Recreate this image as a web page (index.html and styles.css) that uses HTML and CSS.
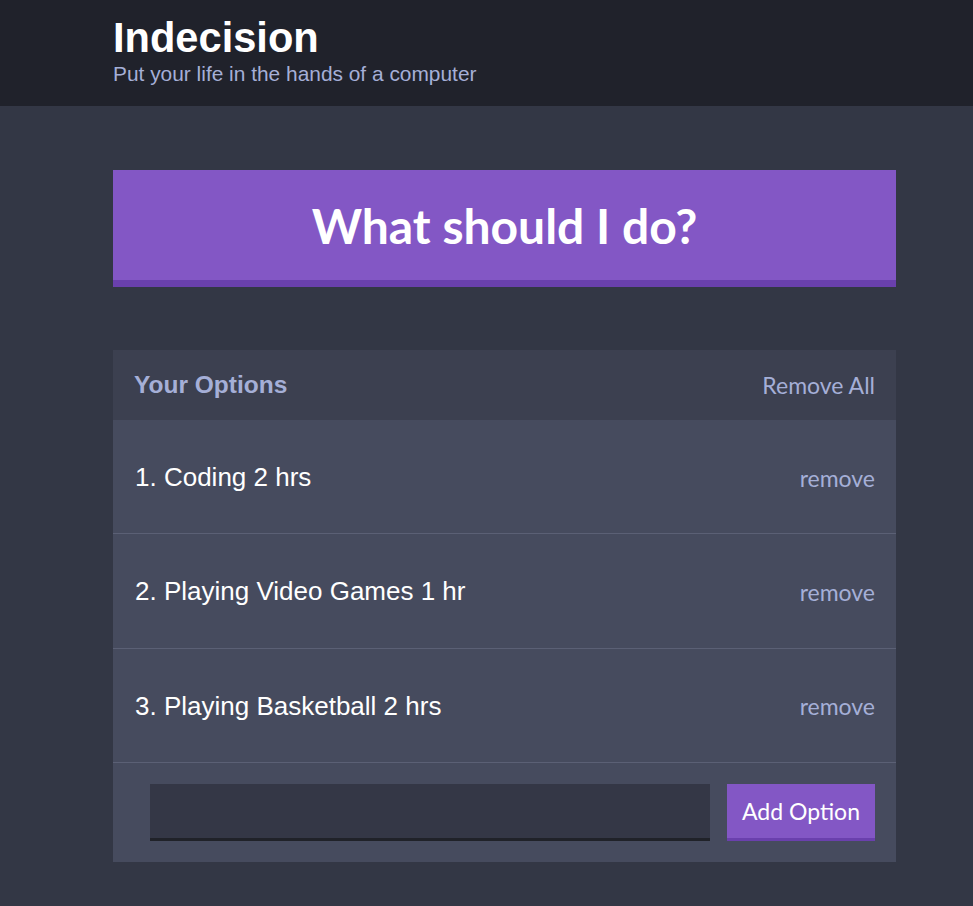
FILE: index.html
```html
<!DOCTYPE html>
<html lang="en">
<head>
<meta charset="utf-8">
<title>Indecision</title>
<link rel="stylesheet" href="styles.css">
</head>
<body>
<header class="header">
  <div class="container">
    <h1 class="header__title">Indecision</h1>
    <h2 class="header__subtitle">Put your life in the hands of a computer</h2>
  </div>
</header>
<main class="container main">
  <button class="big-button">What should I do?</button>
  <section class="widget">
    <div class="widget-header">
      <h3 class="widget-header__title">Your Options</h3>
      <button class="button button--link">Remove All</button>
    </div>
    <div class="option">
      <p class="option__text">1. Coding 2 hrs</p>
      <button class="button button--link button--small">remove</button>
    </div>
    <div class="option">
      <p class="option__text">2. Playing Video Games 1 hr</p>
      <button class="button button--link button--small">remove</button>
    </div>
    <div class="option">
      <p class="option__text">3. Playing Basketball 2 hrs</p>
      <button class="button button--link button--small">remove</button>
    </div>
    <form class="add-option">
      <input class="add-option__input" type="text" name="option">
      <button class="button button--add" type="button">Add Option</button>
    </form>
  </section>
</main>
</body>
</html>
```
FILE: styles.css
```css
* { box-sizing: border-box; }
html, body { margin: 0; padding: 0; }
body {
  background: #333745;
  font-family: "Liberation Sans", Arial, sans-serif;
  color: #ffffff;
  min-height: 906px;
}
.container {
  width: 783px;
  margin-left: 113px;
}
.header {
  background: #20222b;
  padding: 14px 0 20px;
}
.header__title {
  margin: 0;
  font-size: 41.6px;
  font-weight: bold;
  line-height: normal;
  color: #ffffff;
}
.header__subtitle {
  margin: 0;
  font-size: 20.9px;
  font-weight: normal;
  line-height: normal;
  color: #a5afd7;
}
.main {
  padding-top: 64px;
}
.big-button {
  display: block;
  width: 100%;
  height: 117px;
  margin: 0 0 63px;
  padding: 0;
  border: none;
  border-bottom: 7px solid #6a40ad;
  background: #8357c5;
  color: #ffffff;
  font-family: Lato, "Open Sans", sans-serif;
  font-weight: bold;
  font-size: 48px;
  cursor: pointer;
}
.widget {
  background: #464b5e;
  margin-bottom: 40px;
}
.widget-header {
  background: #3c4050;
  height: 70px;
  display: flex;
  align-items: center;
  justify-content: space-between;
  padding: 0 21px;
}
.widget-header__title {
  margin: 0;
  font-size: 24.5px;
  font-weight: bold;
  color: #a5afd7;
}
.button {
  font-family: Lato, "Open Sans", sans-serif;
  cursor: pointer;
}
.button--link {
  background: none;
  border: none;
  padding: 0;
  color: #a5afd7;
  font-size: 23px;
}
.button--small {
  font-size: 23px;
}
.option {
  height: 114.34px;
  display: flex;
  align-items: center;
  justify-content: space-between;
  padding: 2px 21px 0 22px;
  border-bottom: 1px solid #5b6075;
}
.option__text {
  margin: 0;
  font-size: 26px;
  color: #ffffff;
}
.add-option {
  display: flex;
  align-items: stretch;
  gap: 17px;
  padding: 21px 21px 21px 37px;
}
.add-option__input {
  flex: 1;
  height: 57px;
  background: #343746;
  border: none;
  border-bottom: 3px solid #202229;
  color: #a5afd7;
  font-size: 21px;
  padding: 0 16px;
  outline: none;
}
.button--add {
  width: 148px;
  height: 57px;
  background: #8357c5;
  border: none;
  border-bottom: 3px solid #6a40ad;
  color: #ffffff;
  font-size: 23px;
  padding: 0;
}
```
